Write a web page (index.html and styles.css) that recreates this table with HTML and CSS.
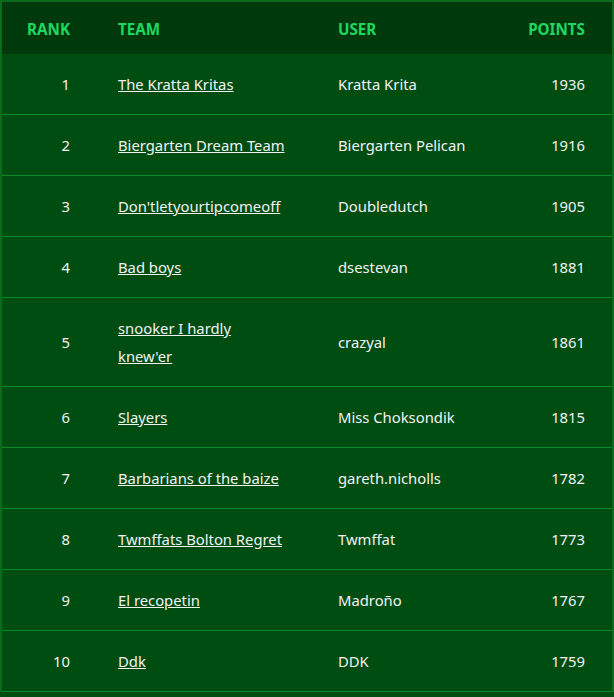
FILE: index.html
```html
<!DOCTYPE html>
<html>
<head>
<meta charset="utf-8">
<link rel="stylesheet" href="styles.css">
</head>
<body>
<table class="board">
  <thead>
    <tr>
      <th class="c-rank">RANK</th>
      <th class="c-team">TEAM</th>
      <th class="c-user">USER</th>
      <th class="c-pts">POINTS</th>
    </tr>
  </thead>
  <tbody>
    <tr><td class="c-rank">1</td><td class="c-team"><a href="#">The Kratta Kritas</a></td><td class="c-user">Kratta Krita</td><td class="c-pts">1936</td></tr>
    <tr><td class="c-rank">2</td><td class="c-team"><a href="#">Biergarten Dream Team</a></td><td class="c-user">Biergarten Pelican</td><td class="c-pts">1916</td></tr>
    <tr><td class="c-rank">3</td><td class="c-team"><a href="#">Don'tletyourtipcomeoff</a></td><td class="c-user">Doubledutch</td><td class="c-pts">1905</td></tr>
    <tr><td class="c-rank">4</td><td class="c-team"><a href="#">Bad boys</a></td><td class="c-user">dsestevan</td><td class="c-pts">1881</td></tr>
    <tr><td class="c-rank">5</td><td class="c-team"><a href="#">snooker I hardly knew'er</a></td><td class="c-user">crazyal</td><td class="c-pts">1861</td></tr>
    <tr><td class="c-rank">6</td><td class="c-team"><a href="#">Slayers</a></td><td class="c-user">Miss Choksondik</td><td class="c-pts">1815</td></tr>
    <tr><td class="c-rank">7</td><td class="c-team"><a href="#">Barbarians of the baize</a></td><td class="c-user">gareth.nicholls</td><td class="c-pts">1782</td></tr>
    <tr><td class="c-rank">8</td><td class="c-team"><a href="#">Twmffats Bolton Regret</a></td><td class="c-user">Twmffat</td><td class="c-pts">1773</td></tr>
    <tr><td class="c-rank">9</td><td class="c-team"><a href="#">El recopetin</a></td><td class="c-user">Madroño</td><td class="c-pts">1767</td></tr>
    <tr><td class="c-rank">10</td><td class="c-team"><a href="#">Ddk</a></td><td class="c-user">DDK</td><td class="c-pts">1759</td></tr>
  </tbody>
</table>
</body>
</html>
```
FILE: styles.css
```css
html, body {
  margin: 0;
  padding: 0;
  background: #004d12;
}
body {
  font-family: "Noto Sans", "Open Sans", sans-serif;
  font-size: 14.8px;
  color: #f2f2f2;
}
.board {
  width: 614px;
  table-layout: fixed;
  border-collapse: separate;
  border-spacing: 0;
  border: 2px solid #0a6b1c;
  border-bottom: none;
  background: #004d12;
}
.board thead tr {
  background: #003a0c;
}
.board th {
  color: #1fd862;
  font-weight: 700;
  font-size: 15.2px;
  line-height: 28px;
  padding: 13px 0 11px;
  text-align: left;
}
.board td {
  line-height: 28px;
  padding: 16px 0;
  border-bottom: 1px solid #0b8a2a;
  vertical-align: middle;
}
.c-rank {
  width: 68px;
  text-align: right !important;
  padding-right: 48px !important;
}
.c-team {
  width: 168px;
  padding-right: 52px !important;
}
.c-user {
  width: 190px;
}
.c-pts {
  text-align: right !important;
  padding-right: 27px !important;
}
.board a {
  color: #f2f2f2;
  text-decoration: underline;
}
```
